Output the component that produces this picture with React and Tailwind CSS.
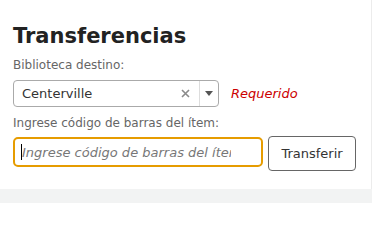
import { useState } from "react";

const Transfers = () => {
  const [library, setLibrary] = useState("Centerville");
  const [barcode, setBarcode] = useState("");

  return (
    <div className="flex flex-col w-[372px] h-[203px] bg-white font-['DejaVu_Sans',sans-serif]">
      <div className="flex flex-col h-[189px] px-[13px] pt-[24px] border-r border-[#ececec]">
        <h1 className="text-[21px] leading-[24px] font-bold text-[#222]">Transferencias</h1>
        <label className="mt-[10px] text-[12px] leading-[14px] text-[#666]">Biblioteca destino:</label>
        <div className="flex flex-row items-center mt-[8px]">
          <div className="flex flex-row items-center w-[206px] h-[27px] border border-[#aaa] rounded-[4px]">
            <span className="flex-1 pl-[8px] text-[13px] text-[#333]">{library}</span>
            <button
              className="flex items-center justify-center w-[14px] h-[14px] mr-[7px]"
              onClick={() => setLibrary("")}
            >
              <svg width="9" height="9" viewBox="0 0 9 9">
                <path d="M1 1L8 8M8 1L1 8" stroke="#8a8a8a" strokeWidth="1.6" />
              </svg>
            </button>
            <div className="flex items-center justify-center w-[19px] h-full border-l border-[#ddd]">
              <svg width="8" height="5" viewBox="0 0 8 5">
                <path d="M0 0H8L4 5Z" fill="#555" />
              </svg>
            </div>
          </div>
          <span className="ml-[12px] text-[13px] italic text-[#cc0000]">Requerido</span>
        </div>
        <label className="mt-[9px] text-[12px] leading-[14px] text-[#666]">
          Ingrese código de barras del ítem:
        </label>
        <div className="flex flex-row items-start gap-[5px] mt-[6px]">
          <div className="relative mt-[1px]">
            <input
              type="text"
              value={barcode}
              onChange={(e) => setBarcode(e.target.value)}
              placeholder="Ingrese código de barras del ítem"
              className="w-[250px] h-[30px] pl-[7px] pr-[30px] border-2 border-[#e69c00] rounded-[5px] text-[13px] italic text-[#333] placeholder:text-[#777] outline-none caret-transparent"
            />
            <span className="absolute left-[8px] top-[7px] w-[1px] h-[16px] bg-black"></span>
          </div>
          <button className="w-[88px] h-[35px] border border-[#666] rounded-[4px] bg-white text-[13px] text-[#333]">
            Transferir
          </button>
        </div>
      </div>
      <div className="flex-1 bg-[#f2f3f3]"></div>
    </div>
  );
};

export default function App() {
  return <Transfers />;
}
